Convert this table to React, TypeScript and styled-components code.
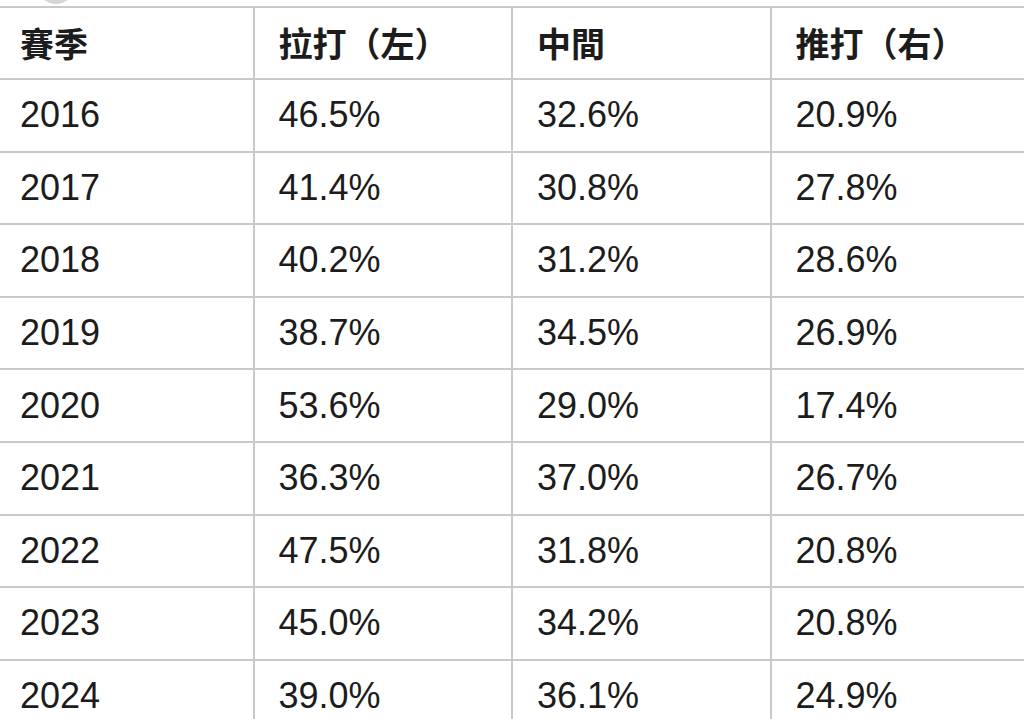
import React from 'react';
import styled, { createGlobalStyle } from 'styled-components';

const GlobalStyle = createGlobalStyle`
  html, body {
    margin: 0;
    padding: 0;
    background: #ffffff;
    overflow: hidden;
  }
`;

const Page = styled.div`
  position: relative;
  width: 1024px;
  height: 719px;
  overflow: hidden;
  padding-top: 6px;
  box-sizing: border-box;
`;

// a bit of a round thing clipped at the top edge
const TopArc = styled.span`
  position: absolute;
  left: 38px;
  top: -30px;
  width: 36px;
  height: 34px;
  border-radius: 50%;
  background: #d6d6d6;
`;

const Table = styled.table`
  margin-left: -6px;
  width: 1036px;
  border-collapse: collapse;
  table-layout: fixed;
  color: #1c1c1c;
`;

const Row = styled.tr<{ $head?: boolean }>`
  height: ${(p) => (p.$head ? '72px' : '72.6px')};
`;

const Cell = styled.td<{ $head?: boolean }>`
  border: 2px solid #c9c9c9;
  padding: 0 0 0 24px;
  vertical-align: middle;
  text-align: left;
  font-family: ${(p) =>
    p.$head
      ? '"Noto Sans CJK TC", "Noto Sans", sans-serif'
      : '"Liberation Sans", Arial, sans-serif'};
  font-size: ${(p) => (p.$head ? '34px' : '36px')};
  font-weight: ${(p) => (p.$head ? 600 : 400)};
  line-height: 1;
  white-space: nowrap;
`;

const headers = ['賽季', '拉打（左）', '中間', '推打（右）'];

const rows: [string, string, string, string][] = [
  ['2016', '46.5%', '32.6%', '20.9%'],
  ['2017', '41.4%', '30.8%', '27.8%'],
  ['2018', '40.2%', '31.2%', '28.6%'],
  ['2019', '38.7%', '34.5%', '26.9%'],
  ['2020', '53.6%', '29.0%', '17.4%'],
  ['2021', '36.3%', '37.0%', '26.7%'],
  ['2022', '47.5%', '31.8%', '20.8%'],
  ['2023', '45.0%', '34.2%', '20.8%'],
  ['2024', '39.0%', '36.1%', '24.9%'],
];

export default function App() {
  return (
    <>
      <GlobalStyle />
      <Page>
        <TopArc />
        <Table>
          <thead>
            <Row $head>
              {headers.map((h) => (
                <Cell as="th" $head key={h}>
                  {h}
                </Cell>
              ))}
            </Row>
          </thead>
          <tbody>
            {rows.map((r) => (
              <Row key={r[0]}>
                {r.map((v, i) => (
                  <Cell key={i}>{v}</Cell>
                ))}
              </Row>
            ))}
          </tbody>
        </Table>
      </Page>
    </>
  );
}
